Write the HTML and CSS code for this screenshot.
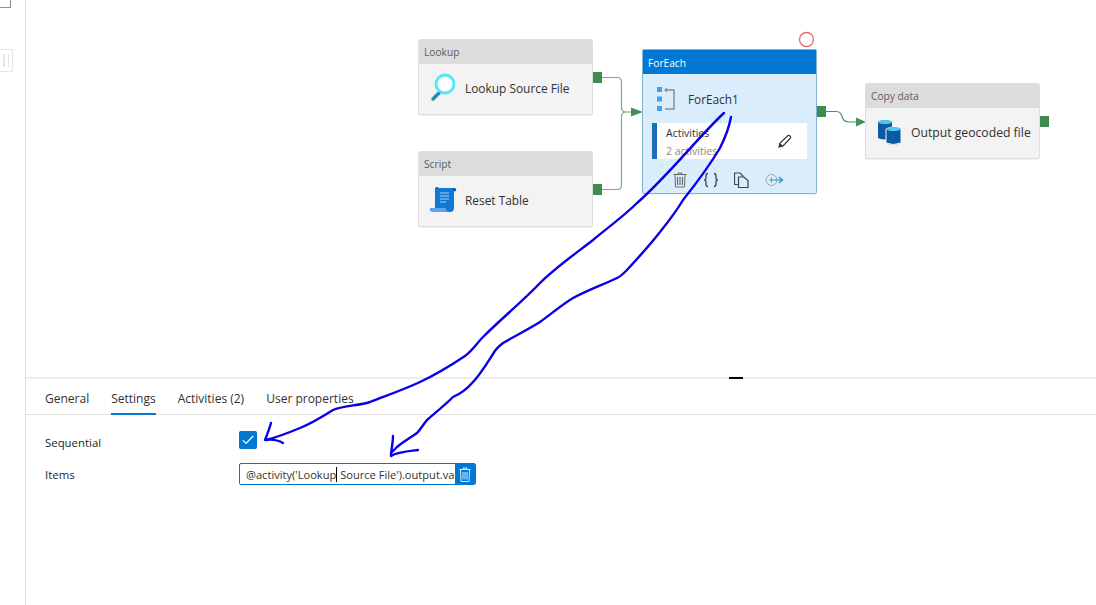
FILE: index.html
```html
<!DOCTYPE html>
<html lang="en">
<head>
<meta charset="utf-8">
<title>ForEach settings</title>
<link rel="stylesheet" href="styles.css">
</head>
<body>
<div class="page">
  <aside class="rail">
    <div class="rail-corner"></div>
    <div class="rail-grip"><span></span><span></span></div>
  </aside>
  <main class="main">
    <section class="canvas">
      <svg class="wires" width="1070" height="378" viewBox="26 0 1070 378">
        <g fill="none" stroke="#6db37c" stroke-width="1.200">
          <path d="M602 77.500H617Q621.500 77.500 621.500 82V107.500Q621.500 112 626 112H634"/>
          <path d="M602 189.500H617Q621.500 189.500 621.500 185V116.500Q621.500 112 626 112"/>
        </g>
        <path class="wire-strong" d="M826 111.500H836C845 111.500 839 122 849 122H857"/>
        <path class="arrow" d="M631 107.500L643 112L631 116.500Z"/>
        <path class="arrow" d="M856 117.500L866 122L856 126.500Z"/>
        <circle cx="806.500" cy="39.500" r="7" fill="none" stroke="#f0646f" stroke-width="1.300"/>
      </svg>

      <div class="node node-lookup">
        <div class="node-head">Lookup</div>
        <div class="node-body">
          <svg class="node-icon" width="28" height="30" viewBox="0 0 28 30">
            <path d="M10 20L4 26" stroke="#1b93b5" stroke-width="3.500" stroke-linecap="round"/>
            <circle cx="16" cy="11" r="9" fill="#fff" stroke="#50e6ff" stroke-width="2.800"/>
          </svg>
          <span class="node-name">Lookup Source File</span>
        </div>
        <span class="port"></span>
      </div>

      <div class="node node-script">
        <div class="node-head">Script</div>
        <div class="node-body">
          <svg class="node-icon" width="28" height="28" viewBox="0 0 28 28">
            <path d="M6 2H25V22Q25 26 21 26H3Q6 25 6 20Z" fill="#0f78d4"/>
            <path d="M6 2Q8 0 10 2H26Q28 3 27 5Q25 6 24 4V2Z" fill="#0b5aa5"/>
            <path d="M1 22H17V24Q18 26 20 26H4Q0 26 1 22Z" fill="#5ea0ef"/>
            <path d="M11 7H20M11 10H20M11 13H20M11 16H17" stroke="#a9d3f5" stroke-width="1"/>
          </svg>
          <span class="node-name">Reset Table</span>
        </div>
        <span class="port"></span>
      </div>

      <div class="node node-foreach">
        <div class="node-head">ForEach</div>
        <div class="foreach-title">
          <svg width="20" height="26" viewBox="0 0 20 26">
            <path d="M1 1H6V6H1ZM1 10.500H6V15.500H1ZM1 20H6V25H1Z" fill="#3fa4ee"/>
            <path d="M10 4H18V23H9" fill="none" stroke="#8d8d8d" stroke-width="1.500"/>
            <path d="M8 4L11 1.500V6.500Z" fill="#8d8d8d"/>
          </svg>
          <span class="node-name">ForEach1</span>
        </div>
        <div class="activities">
          <div class="activities-text">
            <span>Activities</span>
            <span class="activities-count">2 activities</span>
          </div>
          <svg width="14" height="14" viewBox="0 0 14 14">
            <path d="M1 13L2 9L10 1.500Q11 1 12 2L12.500 3Q13 4 12 4.500L5 12Z" fill="none" stroke="#333" stroke-width="1.200"/>
            <path d="M1 13L2 9L5 12Z" fill="#333"/>
          </svg>
        </div>
        <div class="actions">
          <svg width="14" height="16" viewBox="0 0 14 16">
            <path d="M0.500 2.500H13.500M5 2.500V1H9V2.500M2 2.500L2.500 15H11.500L12 2.500" fill="none" stroke="#6b6b6b"/>
            <path d="M4.500 5V13M7 5V13M9.500 5V13" stroke="#6b6b6b" stroke-width="1.200"/>
          </svg>
          <svg width="16" height="16" viewBox="0 0 16 16">
            <path d="M5 1.500Q3 1.500 3 4V6.500Q3 8 1 8Q3 8 3 9.500V12Q3 14.500 5 14.500M11 1.500Q13 1.500 13 4V6.500Q13 8 15 8Q13 8 13 9.500V12Q13 14.500 11 14.500" fill="none" stroke="#444" stroke-width="1.300"/>
          </svg>
          <svg class="action-copy" width="15" height="16" viewBox="0 0 15 16">
            <path d="M4.500 12.500H0.500V1H6L9 4V5M4.500 5H10L14 8.500V15.500H4.500Z" fill="none" stroke="#444" stroke-width="1.200"/>
          </svg>
          <svg width="19" height="14" viewBox="0 0 19 14">
            <circle cx="6.500" cy="7" r="5.500" fill="none" stroke="#a3a3a3"/>
            <path d="M4 7H9M6.500 4.500V9.500" stroke="#8a8a8a"/>
            <path d="M9 7H17M14 4L17.500 7L14 10" fill="none" stroke="#1b93c9" stroke-width="1.200"/>
          </svg>
        </div>
        <span class="port port-foreach"></span>
      </div>

      <div class="node node-copy">
        <div class="node-head">Copy data</div>
        <div class="node-body">
          <svg class="node-icon" width="26" height="26" viewBox="0 0 26 26">
            <path d="M1 3Q8 -1 15 3V19Q8 22 1 19Z" fill="#0b5aa5"/>
            <ellipse cx="8" cy="3" rx="7" ry="2" fill="#50c8ea"/>
            <path d="M9 10Q16 6 24 10V24Q16 27 9 24Z" fill="#0b5aa5" stroke="#f2f2f2" stroke-width="1"/>
            <ellipse cx="16.500" cy="10" rx="7" ry="2" fill="#50c8ea"/>
          </svg>
          <span class="node-name">Output geocoded file</span>
        </div>
        <span class="port"></span>
      </div>

      <span class="resize-mark"></span>
    </section>

    <section class="panel">
      <nav class="tabs">
        <a class="tab">General</a>
        <a class="tab tab-active">Settings</a>
        <a class="tab">Activities (2)</a>
        <a class="tab">User properties</a>
      </nav>
      <div class="form">
        <label class="field-label field-label-sequential">Sequential</label>
        <span class="checkbox">
          <svg width="12" height="10" viewBox="0 0 12 10"><path d="M0.800 5.200L4 8.500L11.200 1" fill="none" stroke="#fff" stroke-width="1.200"/></svg>
        </span>
        <label class="field-label">Items</label>
        <div class="items-input">
          <span class="items-text"><span>@activity('Lookup</span><span class="caret"></span><span> Source File').output.va</span></span>
          <span class="items-delete">
            <svg width="12" height="15" viewBox="0 0 12 15">
              <path d="M0.500 2.500H11.500M4 2.500V1H8V2.500M1.500 2.500L2 14.500H10L10.500 2.500" fill="none" stroke="#d5ebfb"/>
              <path d="M4 5V12.500M6 5V12.500M8 5V12.500" stroke="#d5ebfb"/>
            </svg>
          </span>
        </div>
      </div>
    </section>
  </main>
</div>

<svg class="ink" width="1096" height="605" viewBox="0 0 1096 605">
  <g fill="none" stroke="#0a00e6" stroke-width="2.400" stroke-linecap="round" stroke-linejoin="round">
    <path d="M724 113C700 135 668 176 637 203C625 215 605 230 593 240C575 254 555 268 540 283C525 299 500 320 483 337C477 343 473 350 465 356C450 366 435 375 420 382C403 390 385 396 370 402C358 406 345 405 333 410C322 417 310 424 300 428C288 433 278 437 266 440"/>
    <path d="M271 423C269 430 267 435 265 440C272 439 278 440 283 443"/>
    <path d="M731 117C729 128 725 138 720 148C708 168 695 185 683 200C676 212 668 222 660 232C650 245 638 258 627 270C622 275 620 277 617 278C602 285 588 290 573 298C560 306 550 315 540 322C527 330 515 336 503 343C498 347 495 350 493 354C486 365 480 375 473 382C467 389 460 394 453 397C445 405 435 413 427 420C423 425 420 430 417 433C410 438 403 442 397 447"/>
    <path d="M393 436C393 443 391 450 391 456C397 452 410 451 418 450M396 448L392 452"/>
  </g>
</svg>
</body>
</html>
```
FILE: styles.css
```css
* { box-sizing: border-box; }

html, body {
  margin: 0;
  height: 100%;
  overflow: hidden;
  background: #fff;
}

body {
  font-family: "Open Sans", "Noto Sans", sans-serif;
  color: #323130;
  font-size: 12px;
}

.page {
  display: flex;
  height: 605px;
  position: relative;
}

.rail {
  width: 26px;
  flex: none;
  border-right: 1px solid #dcdcdc;
  padding-top: 0;
}

.rail-corner {
  width: 11px;
  height: 8px;
  border: 1px solid #8f8f8f;
  border-width: 0 1px 1px 0;
}

.rail-grip {
  width: 13px;
  height: 23px;
  margin-top: 41px;
  border: 1px solid #e6e6e6;
  border-left: 0;
  display: flex;
  justify-content: flex-end;
  gap: 3px;
  padding: 4px 3px;
}

.rail-grip span {
  width: 2px;
  background: #e6e6e6;
}

.main {
  flex: 1;
  display: flex;
  flex-direction: column;
  min-width: 0;
}

.canvas {
  position: relative;
  height: 379px;
  flex: none;
  border-bottom: 2px solid #eeeeee;
}

.wires {
  position: absolute;
  left: 0;
  top: 0;
}

.wire-strong {
  fill: none;
  stroke: #4a9060;
  stroke-width: 1.200;
}

.arrow { fill: #4a8f59; }

.node {
  position: absolute;
  width: 175px;
  background: #f3f3f3;
  border: 1px solid #dfdfdf;
  border-radius: 2px;
  box-shadow: 0 1px 1px rgba(0, 0, 0, 0.06);
}

.node-lookup { left: 392px; top: 39px; height: 76px; }
.node-script { left: 392px; top: 151px; height: 76px; }
.node-copy { left: 839px; top: 83px; height: 76px; }

.node-foreach {
  left: 616px;
  top: 49px;
  width: 175px;
  height: 145px;
  background: #d9edfd;
  border-color: #7fb3cf;
}

.node-head {
  height: 24px;
  padding-left: 5px;
  background: #dcdcdc;
  color: #605e5c;
  font-size: 10.200px;
  line-height: 24px;
}

.node-foreach .node-head {
  background: #0078d4;
  color: #fff;
  line-height: 26px;
}

.node-body {
  display: flex;
  align-items: center;
  height: 48px;
}

.node-icon {
  flex: none;
  margin-left: 10px;
}

.node-name {
  font-size: 12px;
  color: #323130;
  white-space: nowrap;
}

.node-lookup .node-name,
.node-script .node-name { margin-left: 8px; font-size: 11.900px; }
.node-copy .node-icon { margin-left: 11px; }
.node-copy .node-name { margin-left: 8px; font-size: 12.200px; }

.port {
  position: absolute;
  right: -10px;
  top: 32px;
  width: 9px;
  height: 11px;
  background: #3f8a4f;
}

.port-foreach { top: 56px; }

.foreach-title {
  display: flex;
  align-items: center;
  gap: 24px;
  height: 49px;
  padding-left: 13px;
}

.foreach-title svg { margin-right: -12px; }
.foreach-title .node-name { font-size: 11.800px; }

.activities {
  display: flex;
  align-items: center;
  justify-content: space-between;
  height: 36px;
  margin: 0 9px;
  padding: 0 15px 0 9px;
  background: #fff;
  border-left: 5px solid #1a6fb8;
}

.activities-text {
  display: flex;
  flex-direction: column;
  font-size: 10.500px;
  line-height: 18px;
  padding-top: 2px;
}

.activities-count { color: #8a8886; }

.actions {
  display: flex;
  align-items: center;
  gap: 16px;
  height: 33px;
  padding: 8px 0 0 30px;
}

.action-copy { margin-left: -1px; }

.resize-mark {
  position: absolute;
  left: 703px;
  top: 377px;
  width: 14px;
  height: 2px;
  background: #000;
}

.panel { flex: 1; }

.tabs {
  display: flex;
  gap: 22px;
  height: 36px;
  padding-left: 19px;
  border-bottom: 1px solid #e1e1e1;
}

.tab {
  height: 36px;
  font-size: 12px;
  line-height: 40px;
  color: #323130;
}

.tab-active {
  border-bottom: 2px solid #0078d4;
}

.form {
  display: grid;
  grid-template-columns: 194px 237px;
  grid-template-rows: 18px 22px;
  row-gap: 14px;
  align-items: center;
  padding: 16px 0 0 19px;
}

.field-label {
  font-size: 11.400px;
  color: #201f1e;
}

.field-label-sequential {
  padding-top: 4px;
}

.checkbox {
  display: flex;
  align-items: center;
  justify-content: center;
  width: 18px;
  height: 18px;
  background: #0078d4;
  border-radius: 2px;
}

.items-input {
  display: flex;
  align-items: center;
  justify-content: space-between;
  height: 22px;
  border: 1px solid #0078d4;
  border-radius: 2px;
  overflow: hidden;
}

.items-text {
  padding-left: 6px;
  font-size: 11.100px;
  white-space: nowrap;
}

.caret {
  display: inline-block;
  width: 1px;
  height: 15px;
  background: #000;
  vertical-align: -3px;
}

.items-delete {
  flex: none;
  display: flex;
  align-items: center;
  justify-content: center;
  width: 20px;
  height: 20px;
  background: #0078d4;
}

.ink {
  position: absolute;
  left: 0;
  top: 0;
  pointer-events: none;
}
```
